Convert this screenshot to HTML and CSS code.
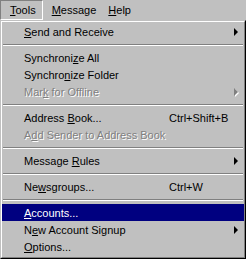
FILE: index.html
```html
<!DOCTYPE html>
<html lang="en">
<head>
    <meta charset="UTF-8">
    <title>Tools Menu</title>
    <link rel="stylesheet" href="styles.css">
</head>
<body>
    <div class="menubar">
        <div class="bar-item active"><u>T</u>ools</div>
        <div class="bar-item"><u>M</u>essage</div>
        <div class="bar-item"><u>H</u>elp</div>
    </div>
    <div class="menu">
        <div class="menu-inner">
            <div class="item"><span><u>S</u>end and Receive</span><span></span><span class="arrow"></span></div>
            <div class="sep"></div>
            <div class="item"><span>Synchroni<u>z</u>e All</span></div>
            <div class="item"><span>Synchro<u>n</u>ize Folder</span></div>
            <div class="item disabled"><span>Mar<u>k</u> for Offline</span><span></span><span class="arrow"></span></div>
            <div class="sep"></div>
            <div class="item"><span>Address <u>B</u>ook...</span><span>Ctrl+Shift+B</span></div>
            <div class="item disabled"><span>A<u>d</u>d Sender to Address Book</span></div>
            <div class="sep"></div>
            <div class="item"><span>Message <u>R</u>ules</span><span></span><span class="arrow"></span></div>
            <div class="sep"></div>
            <div class="item"><span>Ne<u>w</u>sgroups...</span><span>Ctrl+W</span></div>
            <div class="sep"></div>
            <div class="item selected"><span><u>A</u>ccounts...</span></div>
            <div class="item"><span>N<u>e</u>w Account Signup</span><span></span><span class="arrow"></span></div>
            <div class="item"><span><u>O</u>ptions...</span></div>
        </div>
    </div>
</body>
</html>
```

FILE: styles.css
```css
html, body {
    margin: 0;
    padding: 0;
}

body {
    width: 246px;
    height: 259px;
    background-color: #000;
    font-family: "Liberation Sans", Arial, sans-serif;
    font-size: 11px;
    color: #000;
    overflow: hidden;
}

u {
    text-decoration-thickness: 1px;
    text-underline-offset: 1px;
}

.menubar {
    display: flex;
    height: 20px;
    background-color: #c0c0c0;
}

.bar-item {
    height: 18px;
    line-height: 18px;
    padding: 0 5px;
    border: 1px solid transparent;
}

.bar-item.active {
    padding: 0 6px 0 9px;
    border-color: #808080 #fff #fff #808080;
    margin-right: 3px;
}

.menu {
    height: 237px;
    border: 1px solid;
    border-color: #c0c0c0 #000 #000 #c0c0c0;
    background-color: #c0c0c0;
}

.menu-inner {
    height: 233px;
    padding: 1px 0;
    border: 1px solid;
    border-color: #fff #808080 #808080 #fff;
}

.item {
    display: grid;
    grid-template-columns: 145px 1fr 10px;
    align-items: center;
    height: 17px;
    padding-left: 22px;
    white-space: nowrap;
}

.item.selected {
    background-color: #000080;
    color: #fff;
}

.item.disabled {
    color: #808080;
    text-shadow: 1px 1px 0 #fff;
}

.arrow {
    width: 0;
    height: 0;
    border-top: 4px solid transparent;
    border-bottom: 4px solid transparent;
    border-left: 4px solid #000;
}

.item.disabled .arrow {
    border-left-color: #808080;
    filter: drop-shadow(1px 1px 0 #fff);
}

.sep {
    height: 9px;
    margin: 0 1px;
    display: flex;
    flex-direction: column;
    justify-content: center;
}

.sep::before {
    content: "";
    height: 1px;
    background-color: #808080;
    border-bottom: 1px solid #fff;
}
```
